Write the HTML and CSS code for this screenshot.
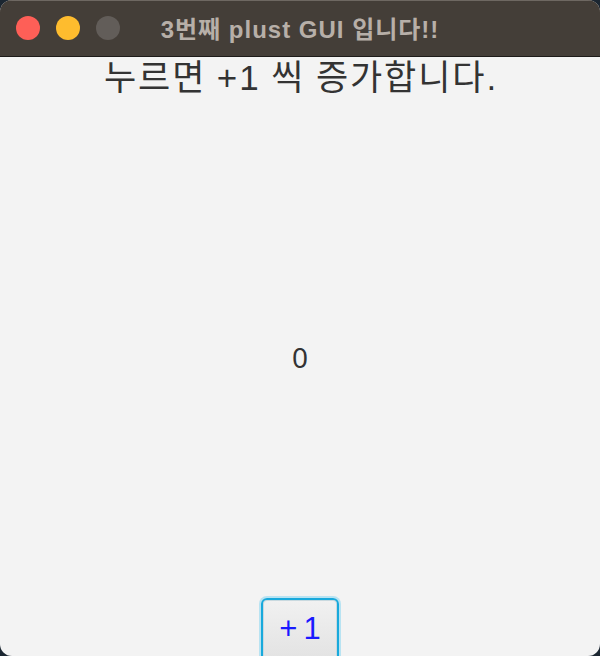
FILE: index.html
```html
<!DOCTYPE html>
<html lang="ko">
<head>
<meta charset="utf-8">
<title>3번째 plust GUI 입니다!!</title>
<link rel="stylesheet" href="styles.css">
</head>
<body>
<div class="window">
  <div class="titlebar">
    <div class="lights">
      <span class="light red"></span>
      <span class="light yellow"></span>
      <span class="light gray"></span>
    </div>
    <div class="title">3번째 plust GUI 입니다!!</div>
  </div>
  <div class="content">
    <div class="heading">누르면 +1 씩 증가합니다.</div>
    <div class="middle"><span class="count">0</span></div>
    <div class="bottom"><button class="plus">+1</button></div>
  </div>
</div>
</body>
</html>
```
FILE: styles.css
```css
html, body {
  margin: 0;
  padding: 0;
  background: #1b2631;
}
.window {
  width: 600px;
  height: 656px;
  border-radius: 12px;
  overflow: hidden;
  display: flex;
  flex-direction: column;
  background: #f3f3f3;
}
.titlebar {
  flex: none;
  height: 57px;
  box-sizing: border-box;
  background: #443e38;
  border-top: 1px solid #6e6862;
  border-bottom: 1px solid #1d1b19;
  position: relative;
  display: flex;
  align-items: center;
  justify-content: center;
}
.lights {
  position: absolute;
  left: 16px;
  top: 15px;
  display: flex;
  gap: 16px;
}
.light {
  width: 24px;
  height: 24px;
  border-radius: 50%;
  display: block;
}
.red { background: #fe5f57; }
.yellow { background: #febc2e; }
.gray { background: #625d59; }
.title {
  font-family: "Liberation Sans", "Noto Sans CJK KR", sans-serif;
  font-weight: bold;
  font-size: 24px;
  letter-spacing: 1px;
  color: #b7afa8;
  margin-top: -2px;
}
.content {
  flex: 1;
  display: flex;
  flex-direction: column;
  overflow: hidden;
  font-family: "Liberation Sans", "Noto Sans CJK KR", sans-serif;
  color: #333333;
}
.heading {
  height: 44px;
  flex: none;
  text-align: center;
  font-size: 35px;
  letter-spacing: 1.9px;
  word-spacing: -1px;
  line-height: 42px;
  white-space: nowrap;
  padding-left: 2px;
}
.middle {
  height: 497px;
  flex: none;
  box-sizing: border-box;
  padding-top: 15px;
  display: flex;
  align-items: center;
  justify-content: center;
}
.count {
  font-size: 28px;
  font-family: "Noto Sans", sans-serif;
}
.bottom {
  flex: none;
  display: flex;
  justify-content: center;
}
.plus {
  width: 78px;
  height: 66px;
  box-sizing: border-box;
  border: 2px solid #18a9dc;
  border-radius: 6px;
  box-shadow: 0 0 0 2px #b8e3f2, inset 0 0 0 1px #c9d9df;
  background: linear-gradient(#f1f1f1, #e2e2e2);
  color: #1a1aff;
  font-family: "Liberation Sans", sans-serif;
  font-size: 31px;
  padding: 0 0 4px 0;
  letter-spacing: 6px;
  text-indent: 6px;
}
```
